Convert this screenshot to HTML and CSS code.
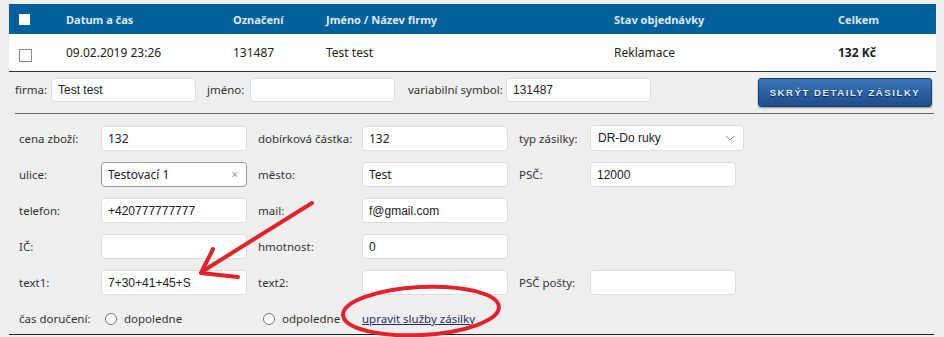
FILE: index.html
```html
<!DOCTYPE html>
<html>
	<head>
		<title>Objednávky</title>
		<link rel="stylesheet" href="styles.css">
	</head>
	<body>
		<div class="page">
			<div class="orders">
				<div class="orders-head">
					<span class="cell first"><span class="check-head"></span></span>
					<span class="cell">Datum a čas</span>
					<span class="cell">Označení</span>
					<span class="cell">Jméno / Název firmy</span>
					<span class="cell">Stav objednávky</span>
					<span class="cell">Celkem</span>
				</div>
				<div class="orders-row">
					<span class="cell first"><span class="check"></span></span>
					<span class="cell">09.02.2019 23:26</span>
					<span class="cell">131487</span>
					<span class="cell">Test test</span>
					<span class="cell">Reklamace</span>
					<span class="cell total">132 Kč</span>
				</div>
			</div>

			<div class="filter">
				<label class="flabel firma">firma:</label>
				<input class="field" type="text" value="Test test">
				<label class="flabel jmeno">jméno:</label>
				<input class="field" type="text" value="">
				<label class="flabel vs">variabilní symbol:</label>
				<input class="field" type="text" value="131487">
				<button class="btn-detail">SKRÝT DETAILY ZÁSILKY</button>
			</div>
			<hr class="sep">

			<div class="detail">
				<label class="dlabel">cena zboží:</label>
				<input class="field alt" type="text" value="132">
				<label class="dlabel">dobírková částka:</label>
				<input class="field alt" type="text" value="132">
				<label class="dlabel">typ zásilky:</label>
				<div class="select">
					<span>DR-Do ruky</span>
					<svg width="10" height="6" viewBox="0 0 10 6"><path d="M1 1 L5 5 L9 1" fill="none" stroke="#888" stroke-width="1"/></svg>
				</div>

				<label class="dlabel">ulice:</label>
				<div class="search">
					<input type="text" value="Testovací 1">
					<span class="clear">×</span>
				</div>
				<label class="dlabel">město:</label>
				<input class="field alt" type="text" value="Test">
				<label class="dlabel">PSČ:</label>
				<input class="field" type="text" value="12000">

				<label class="dlabel">telefon:</label>
				<input class="field" type="text" value="+420777777777">
				<label class="dlabel">mail:</label>
				<input class="field" type="text" value="f@gmail.com">
				<span></span>
				<span></span>

				<label class="dlabel">IČ:</label>
				<input class="field" type="text" value="">
				<label class="dlabel">hmotnost:</label>
				<input class="field" type="text" value="0">
				<span></span>
				<span></span>

				<label class="dlabel">text1:</label>
				<input class="field" type="text" value="7+30+41+45+S">
				<label class="dlabel">text2:</label>
				<input class="field" type="text" value="">
				<label class="dlabel">PSČ pošty:</label>
				<input class="field short" type="text" value="">

				<label class="dlabel">čas doručení:</label>
				<span class="radio-opt first-opt"><span class="radio"></span>dopoledne</span>
				<span class="radio-opt"><span class="radio"></span>odpoledne</span>
				<a class="link" href="#">upravit služby zásilky</a>
			</div>
			<hr class="sep-bottom">

			<svg class="marks" width="944" height="337" viewBox="0 0 944 337">
				<g fill="none" stroke="#e3222b" stroke-width="4" stroke-linecap="round" stroke-linejoin="round">
					<path d="M312 203 L203 271"/>
					<path d="M213 249 L201 273 L238 277"/>
					<ellipse cx="421" cy="311" rx="78" ry="24" transform="rotate(-3 421 311)"/>
				</g>
			</svg>
		</div>
	</body>
</html>
```

FILE: styles.css
```css
* {
	box-sizing: border-box;
}
body {
	margin: 0;
	background-color: #efefef;
	font-family: "Noto Sans", sans-serif;
	font-size: 12px;
	color: #333;
}
.page {
	position: relative;
	width: 944px;
	height: 337px;
	padding: 4px 8px 0 9px;
}

/* orders table */
.orders-head, .orders-row {
	display: grid;
	grid-template-columns: 57px 167px 93px 288px 224px 98px;
	align-items: center;
}
.orders-head {
	height: 30px;
	background-color: #03609b;
	color: #dfe8f1;
	font-weight: bold;
	font-size: 11px;
}
.orders-row {
	height: 38px;
	background-color: #fff;
	border-bottom: 1px solid #333;
	color: #222;
}
.cell.first {
	padding-left: 10px;
}
.check-head {
	display: block;
	width: 11px;
	height: 11px;
	background-color: #fff;
}
.check {
	display: block;
	width: 13px;
	height: 13px;
	margin-top: 6px;
	border: 1px solid #888;
	background-color: #fff;
}
.total {
	font-weight: bold;
}

/* inputs */
.field {
	width: 146px;
	height: 25px;
	padding: 0 6px;
	border: 1px solid #ddd;
	border-radius: 4px;
	background-color: #fff;
	font-family: "Liberation Sans", sans-serif;
	font-size: 12px;
	color: #222;
	outline: none;
}
.field.alt {
	font-family: "Noto Sans", sans-serif;
}

/* filter row */
.filter {
	display: flex;
	align-items: flex-start;
	height: 41px;
	padding: 6px 4px 0 6px;
}
.filter .field {
	flex-shrink: 0;
	width: 145px;
	height: 24px;
}
.flabel {
	flex-shrink: 0;
	line-height: 24px;
	font-size: 11.5px;
	white-space: nowrap;
}
.flabel.firma {
	width: 36px;
}
.flabel.jmeno {
	width: 43px;
	margin-left: 11px;
}
.flabel.vs {
	width: 98px;
	margin-left: 13px;
}
.btn-detail {
	flex-shrink: 0;
	margin-left: auto;
	width: 174px;
	height: 29px;
	padding: 0;
	border: 1px solid #1a3f70;
	border-radius: 3px;
	background: linear-gradient(#3b75b6, #1d4e8c);
	box-shadow: 0 1px 2px rgba(0, 0, 0, 0.4);
	color: #e8eef6;
	font-family: "Liberation Sans", sans-serif;
	font-weight: bold;
	font-size: 9.5px;
	letter-spacing: 1.6px;
	white-space: nowrap;
	text-shadow: 0 1px 1px #0b2240;
}
hr.sep {
	margin: 0 2px 0 6px;
	border: 0;
	border-top: 1px solid #666;
}

/* detail grid */
.detail {
	display: grid;
	grid-template-columns: 71px 146px 93px 146px 60px 154px;
	grid-auto-rows: 25px;
	column-gap: 11px;
	row-gap: 11px;
	padding: 12px 0 0 10px;
	margin-bottom: 3px;
	font-size: 11.5px;
}
.dlabel {
	align-self: center;
	white-space: nowrap;
}
.select {
	display: flex;
	align-items: center;
	justify-content: space-between;
	height: 26px;
	margin-top: -1px;
	padding: 0 8px 0 7px;
	border: 1px solid #ddd;
	border-radius: 4px;
	background-color: #fff;
	font-family: "Liberation Sans", sans-serif;
	font-size: 12px;
	color: #222;
}
.search {
	display: flex;
	align-items: center;
	width: 146px;
	height: 25px;
	padding: 0 8px 0 6px;
	border: 1px solid #999;
	border-radius: 4px;
	background-color: #fff;
}
.search input {
	width: 120px;
	border: 0;
	padding: 0;
	font-family: "Noto Sans", sans-serif;
	font-size: 12px;
	color: #222;
	outline: none;
}
.clear {
	margin-left: auto;
	color: #999;
	font-size: 12px;
}
.radio-opt {
	display: flex;
	align-items: center;
	padding-left: 5px;
}
.radio-opt.first-opt {
	padding-left: 4px;
}
.radio {
	width: 12px;
	height: 12px;
	margin-right: 7px;
	border: 1px solid #777;
	border-radius: 50%;
	background-color: #fff;
}
.link {
	align-self: center;
	color: #1f2a6e;
	white-space: nowrap;
}
hr.sep-bottom {
	margin: 0 2px 0 0;
	border: 0;
	border-top: 1px solid #222;
}

/* red annotations over the form */
.marks {
	position: absolute;
	top: 0;
	left: 0;
	pointer-events: none;
}
```
